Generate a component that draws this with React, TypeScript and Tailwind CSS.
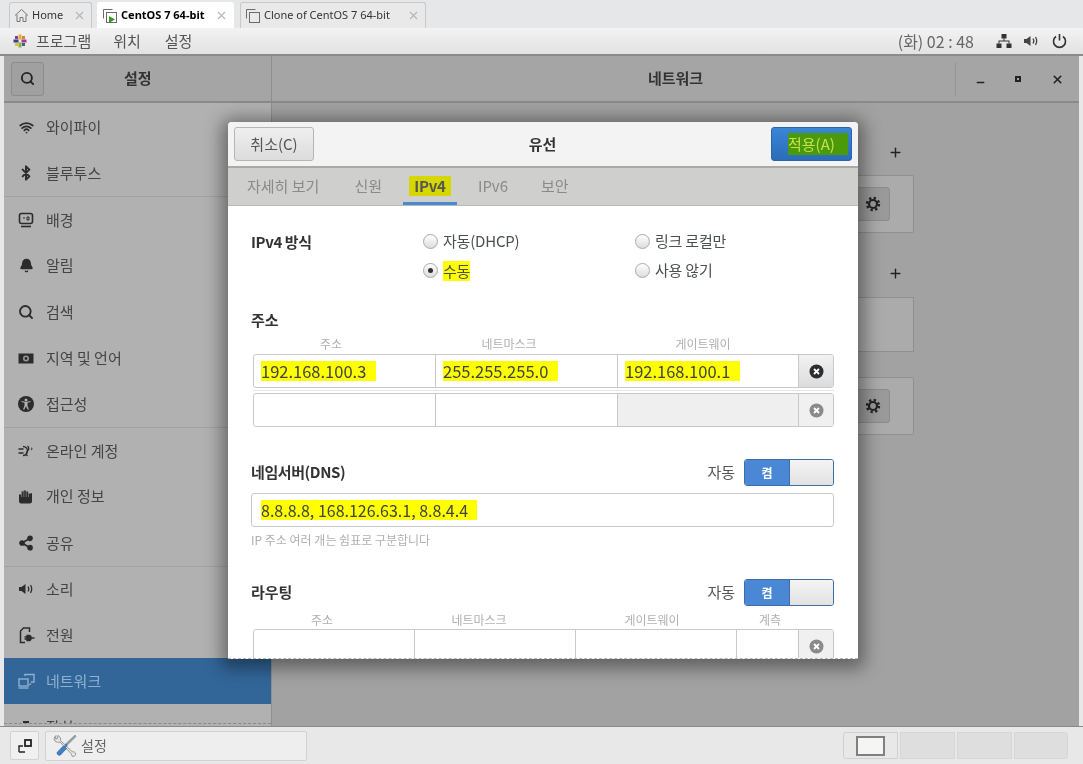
import { Bell, Bluetooth, ChevronRight, Minus, Plus, Search, Share2, Wifi, X } from "lucide-react";

const font = "font-['Noto_Sans_CJK_KR','Noto_Sans',sans-serif]";

function Pinwheel() {
  return (
    <svg width="14" height="14" viewBox="0 0 14 14">
      <rect x="5.5" y="0.5" width="3" height="5" fill="#d9b13b" />
      <rect x="8.5" y="5.5" width="5" height="3" fill="#a23a8c" />
      <rect x="5.5" y="8.5" width="3" height="5" fill="#8cae3a" />
      <rect x="0.5" y="5.5" width="5" height="3" fill="#3a3f94" />
      <rect x="2" y="2" width="3" height="3" fill="#8c3a8c" />
      <rect x="9" y="2" width="3" height="3" fill="#c98a3a" />
      <rect x="2" y="9" width="3" height="3" fill="#d8c23a" />
      <rect x="9" y="9" width="3" height="3" fill="#3a5f94" />
    </svg>
  );
}

function VmIcon({ play }: { play?: boolean }) {
  return (
    <svg width="16" height="16" viewBox="0 0 16 16" fill="none" stroke="#6b6b6b">
      <path d="M1.5 10.5v-9h9" />
      <rect x="4.5" y="4.5" width="10" height="10" fill={play ? "#fff" : "none"} />
      {play && <path d="M7 8l6 3.5-6 3.5z" fill="#3c9a1c" stroke="none" />}
    </svg>
  );
}

function HomeIcon() {
  return (
    <svg width="15" height="15" viewBox="0 0 15 15" fill="none" stroke="#777">
      <path d="M1 7.5L7.5 1.5 14 7.5M3 6.5v7h3v-4h3v4h3v-7" />
    </svg>
  );
}

function Tab({ children, active, icon, w }: { children: string; active?: boolean; icon: React.ReactNode; w: string }) {
  return (
    <div
      className={`flex h-[26px] items-center gap-[3px] rounded-t-[3px] border border-b-0 pl-[4px] pr-[5px] text-[11px] ${w} ${
        active ? "border-white bg-white font-bold text-black" : "border-[#c8c8c8] bg-[#e9e9e9] text-[#333]"
      }`}
    >
      {icon}
      <span className="flex-1 whitespace-nowrap font-['Noto_Sans',sans-serif]">{children}</span>
      <X size={13} className="text-[#b5b5b5]" />
    </div>
  );
}

const G = "#2c2c2c";

function RegionIcon() {
  return (
    <svg width="16" height="16" viewBox="0 0 16 16">
      <path d="M0.5 3.5h15v10h-15z" fill={G} />
      <circle cx="8" cy="8.5" r="3" fill="#999" />
      <circle cx="8" cy="8.5" r="1.4" fill={G} />
    </svg>
  );
}

function BackgroundIcon() {
  return (
    <svg width="16" height="16" viewBox="0 0 16 16" fill="none" stroke={G} strokeWidth="1.6">
      <rect x="1.5" y="1.5" width="13" height="10" rx="2" />
      <path d="M3 14.5h10" />
      <path d="M5 6h2M9 5h2v3H9z" strokeWidth="1" />
    </svg>
  );
}

function AccessIcon() {
  return (
    <svg width="16" height="16" viewBox="0 0 16 16">
      <circle cx="8" cy="8" r="8" fill={G} />
      <circle cx="8" cy="4" r="1.5" fill="#b1b1b1" />
      <path d="M3.5 6l3 .8v3L5 13.5h1.3L8 10.2l1.7 3.3H11L9.500 9.800v-3l3-.8v-1L8 6 3.500 5z" fill="#b1b1b1" />
    </svg>
  );
}

function OnlineIcon() {
  return (
    <svg width="16" height="16" viewBox="0 0 16 16" fill="none" stroke={G} strokeWidth="1.3">
      <path d="M0.500 6h5M0.500 10h5M5 3.500a4.500 4.500 0 0 1 0 9M9.500 3c1.500 1.500 1.500 3.500 0 5s-1.500 3.500 0 5" />
      <path d="M13 5c1.500 0 1.500 1.500 0 2" strokeWidth="1" />
    </svg>
  );
}

function HandIcon() {
  return (
    <svg width="16" height="16" viewBox="0 0 16 16" fill={G}>
      <path d="M1 5.500h2.300V2.500h2.300V1.500h2.400v1h2.300v2h2.400l1.300-.5v8.500c0 1.200-1 2-2.200 2H3c-1.200 0-2-1-2-2.200z" />
      <path d="M3.500 3v5M5.800 2v6M8.200 2v6M10.500 3v5" stroke="#b1b1b1" strokeWidth=".5" />
    </svg>
  );
}

function SoundIcon({ color = G }: { color?: string }) {
  return (
    <svg width="16" height="16" viewBox="0 0 16 16" fill="none">
      <path d="M1 6h2.500L7.500 3v10l-4-3H1z" fill={color} />
      <path d="M10 5.500c1 1.500 1 3.500 0 5M12.500 4c1.500 2.500 1.500 5.500 0 8" stroke={color} strokeWidth="1.300" />
    </svg>
  );
}

function PowerIcon() {
  return (
    <svg width="17" height="17" viewBox="0 0 17 17" fill="none">
      <path d="M7 15.500H2.500V4l3-3h6v4" stroke={G} strokeWidth="1.500" />
      <path d="M9 8.500h3a3 3 0 0 1 0 5H9zM6.500 10h2.500M6.500 12h2.500M14 11h2.500" fill={G} stroke={G} strokeWidth="1.300" />
    </svg>
  );
}

function NetIcon() {
  return (
    <svg width="17" height="16" viewBox="0 0 17 16" fill="none" stroke="#8fb0d0" strokeWidth="1.400">
      <rect x="1" y="6" width="9" height="7" />
      <path d="M0.500 15h10" />
      <path d="M7 3V1.500h9V9h-3" />
      <path d="M11 12l2-1.500" />
    </svg>
  );
}

function DeviceIcon() {
  return (
    <svg width="16" height="16" viewBox="0 0 16 16" fill={G}>
      <rect x="5" y="1" width="6" height="5" />
      <rect x="1" y="6" width="14" height="8" rx="1" />
    </svg>
  );
}

function Gear() {
  return (
    <svg width="16" height="16" viewBox="0 0 16 16" fill="none" stroke="#222">
      <circle cx="8" cy="8" r="4" strokeWidth="2.200" />
      <circle cx="8" cy="8" r="6" strokeWidth="2.400" strokeDasharray="2.300 2.410" />
    </svg>
  );
}

const items: { label: string; icon: React.ReactNode; sep?: boolean; active?: boolean; more?: boolean }[] = [
  { label: "와이파이", icon: <Wifi size={15} strokeWidth={2.8} color={G} /> },
  { label: "블루투스", icon: <Bluetooth size={16} strokeWidth={3} color={G} /> },
  { label: "배경", icon: <BackgroundIcon />, sep: true },
  { label: "알림", icon: <Bell size={15} fill={G} color={G} /> },
  { label: "검색", icon: <Search size={16} strokeWidth={2.8} color={G} /> },
  { label: "지역 및 언어", icon: <RegionIcon /> },
  { label: "접근성", icon: <AccessIcon /> },
  { label: "온라인 계정", icon: <OnlineIcon />, sep: true },
  { label: "개인 정보", icon: <HandIcon /> },
  { label: "공유", icon: <Share2 size={16} fill={G} strokeWidth={2.6} color={G} /> },
  { label: "소리", icon: <SoundIcon />, sep: true },
  { label: "전원", icon: <PowerIcon /> },
  { label: "네트워크", icon: <NetIcon />, active: true },
  { label: "장치", icon: <DeviceIcon />, more: true },
];

function CloseDot({ dim }: { dim?: boolean }) {
  return (
    <svg width="15" height="15" viewBox="0 0 15 15">
      <circle cx="7.500" cy="7.500" r="7" fill={dim ? "#8a8a8a" : "#2a2e30"} />
      <path d="M5 5l5 5M10 5l-5 5" stroke="#fff" strokeWidth="1.800" />
    </svg>
  );
}

function Radio({ label, on, hl }: { label: string; on?: boolean; hl?: boolean }) {
  return (
    <div className="flex h-[29px] items-center gap-[5px] text-[15px] tracking-[-0.2px] text-[#4a4f50]">
      <span className="flex h-[15px] w-[15px] items-center justify-center rounded-full border border-[#a9a9a9] bg-gradient-to-b from-white to-[#dcdcdc]">
        {on && <span className="h-[5px] w-[5px] rounded-full bg-[#2e3436]" />}
      </span>
      <span className={hl ? "bg-[#ffff00] leading-[20px]" : ""}>{label}</span>
    </div>
  );
}

function Switch() {
  return (
    <div className="flex h-[27px] w-[90px] overflow-hidden rounded-[3px] border border-[#3d6ea8]">
      <div className="flex w-[44px] items-center justify-center bg-[#4a88d6] text-[12px] font-bold text-white">켬</div>
      <div className="flex-1 border-l border-[#3d6ea8] bg-gradient-to-b from-[#f4f4f4] to-[#e2e2e2]" />
    </div>
  );
}

function Cell({ w, value, gray }: { w: string; value?: string; gray?: boolean }) {
  return (
    <div className={`flex items-center border-r border-[#c9c9c9] pl-[7px] text-[16.5px] leading-none text-[#3e4344] ${w} ${gray ? "bg-[#efefef]" : ""}`}>
      {value && <span className="bg-[#ffff00] py-[2px] pr-[10px]">{value}</span>}
    </div>
  );
}

function Caption({ w, children }: { w: string; children: string }) {
  return <div className={`text-center text-[12px] leading-[16px] text-[#b0b0b0] ${w}`}>{children}</div>;
}

export default function App() {
  return (
    <div className={`relative flex h-[764px] w-[1083px] flex-col overflow-hidden bg-[#e8e8e8] blur-[0.4px] ${font}`}>
      {/* tabs */}
      <div className="flex h-[28px] shrink-0 items-end gap-[5px] bg-[#e6e7e8] pl-[9px]">
        <Tab icon={<HomeIcon />} w="w-[83px]">Home</Tab>
        <Tab icon={<VmIcon play />} w="w-[137px]" active>CentOS 7 64-bit</Tab>
        <Tab icon={<VmIcon />} w="w-[186px] ml-[1px]">Clone of CentOS 7 64-bit</Tab>
      </div>

      {/* top bar */}
      <div className="flex h-[28px] shrink-0 items-center border-b-2 border-[#8b8b8b] bg-gradient-to-b from-[#f3f3f3] to-[#e2e2e2] pl-[13px] pr-[16px] text-[15px] text-[#555]">
        <Pinwheel />
        <span className="ml-[9px]">프로그램</span>
        <span className="ml-[22px]">위치</span>
        <span className="ml-[24px]">설정</span>
        <span className="ml-auto text-[16px] text-[#666]">(화) 02 : 48</span>
        <svg className="ml-[22px]" width="16" height="16" viewBox="0 0 16 16" fill="#333">
          <rect x="5.500" y="1" width="5" height="4.500" />
          <rect x="0.500" y="10.500" width="5" height="4.500" />
          <rect x="10.500" y="10.500" width="5" height="4.500" />
          <path d="M7.500 5.500h1V7.500H13.500v3h-1V8.500h-9v2h-1v-3H7.500z" />
        </svg>
        <span className="ml-[11px]"><SoundIcon color="#444" /></span>
        <svg className="ml-[13px]" width="15" height="16" viewBox="0 0 15 16" fill="none" stroke="#333" strokeWidth="1.600">
          <path d="M4 3.500a6 6 0 1 0 7 0M7.500 1v6.500" />
        </svg>
      </div>

      {/* window */}
      <div className="flex min-h-0 flex-1 flex-col px-[4px]">
        <div className="flex h-[47px] shrink-0 border-b-2 border-[#8a8a8a] bg-[#a5a5a5]">
          <div className="flex w-[268px] items-center border-r border-[#8f8f8f] pl-[7px]">
            <div className="flex h-[34px] w-[33px] items-center justify-center rounded-[3px] border border-[#8c8c8c] bg-[#a0a0a0]">
              <Search size={15} strokeWidth={3} color="#222" />
            </div>
            <span className="ml-[80px] text-[15px] font-bold text-[#333]">설정</span>
          </div>
          <div className="relative flex flex-1 items-center justify-center">
            <span className="text-[15px] font-bold text-[#333]">네트워크</span>
            <div className="absolute right-0 top-[6px] flex h-[34px] w-[124px] items-center justify-around border-l border-[#969696] pl-[4px] text-[#222]">
              <Minus size={11} strokeWidth={3} className="translate-y-[3px]" />
              <span className="h-[6px] w-[6px] border-2 border-[#222]" />
              <X size={13} strokeWidth={3} />
            </div>
          </div>
        </div>

        <div className="flex min-h-0 flex-1">
          <div className="flex h-full w-[268px] shrink-0 flex-col border-r border-[#8f8f8f] bg-[#b1b1b1]">
            <div className="min-h-0 flex-1 overflow-hidden pt-[1px]">
              {items.map((it) => (
                <div
                  key={it.label}
                  className={`flex h-[46.2px] items-center text-[15px] ${it.sep ? "border-t border-[#a3a3a3]" : ""} ${
                    it.active ? "bg-[#326699] text-[#8fb0d0]" : "text-[#444]"
                  }`}
                >
                  <span className="flex w-[42px] justify-center pl-[6px] pr-[4px]">{it.icon}</span>
                  <span>{it.label}</span>
                  {it.more && <ChevronRight size={14} className="ml-auto mr-[17px]" color={G} />}
                </div>
              ))}
            </div>
            <div className="mb-[2px] border-b border-dashed border-[#8a8a8a]" />
          </div>
          <div className="min-w-0 flex-1 bg-[#a2a2a2]">
            <div className="mx-auto flex w-[476px] flex-col pt-[39px]">
              <div className="flex h-[20px] items-center justify-end pr-[11px] text-[#222]">
                <Plus size={15} strokeWidth={2.2} />
              </div>
              <div className="mt-[13px] flex h-[58px] items-center justify-end rounded-[2px] border border-[#8f8f8f] bg-[#ababab] pr-[23px]">
                <div className="flex h-[34px] w-[34px] items-center justify-center rounded-[3px] border border-[#8c8c8c] bg-[#9a9a9a]">
                  <Gear />
                </div>
              </div>
              <div className="mt-[30px] flex h-[20px] items-center justify-end pr-[11px] text-[#222]">
                <Plus size={15} strokeWidth={2.2} />
              </div>
              <div className="mt-[14px] h-[55px] border border-[#8f8f8f] bg-[#ababab]" />
              <div className="mt-[25px] flex h-[58px] items-center justify-end rounded-[2px] border border-[#8f8f8f] bg-[#ababab] pr-[23px]">
                <div className="flex h-[34px] w-[34px] items-center justify-center rounded-[3px] border border-[#8c8c8c] bg-[#9a9a9a]">
                  <Gear />
                </div>
              </div>
            </div>
          </div>
        </div>
      </div>

      {/* taskbar */}
      <div className="flex h-[38px] shrink-0 items-center border-t border-[#8a8a8a] bg-[#e8e8e8] pl-[10px] pr-[15px]">
        <div className="flex h-[29px] w-[29px] items-center justify-center rounded-[2px] border border-[#d2d2d2] bg-[#f0f0f0]">
          <svg width="14" height="14" viewBox="0 0 14 14" fill="none" stroke="#222" strokeWidth="1.400">
            <path d="M1 13V7h4M7 13H1" />
            <rect x="7" y="1" width="6" height="6" strokeWidth="1.800" />
          </svg>
        </div>
        <div className="ml-[6px] flex h-[30px] w-[262px] items-center rounded-[2px] border border-[#d2d2d2] bg-[#eeeeee] pl-[7px] text-[14px] text-[#666]">
          <svg width="24" height="24" viewBox="0 0 24 24" fill="none">
            <path d="M3 1.500c-2 1.500-2.500 4-1 5.500s3.500 1.500 5 1l11 11.500c.8 1 .5 3 2 3s3.500-2 2.500-3.500-3-.8-4-2L7.500 6.500c.5-2-.5-4-2.500-5l-.5 3-2 .5z" fill="#e4e6e8" stroke="#7d8488" strokeWidth=".8" />
            <path d="M22 1l1 1.500-8 8-1.500-1.500z" fill="#9aa0a5" stroke="#6f767b" strokeWidth=".5" />
            <path d="M13 9.500l1.500 1.500-2 2.500 1 1-6 6.500c-1.200 1.200-4.500-1-3.200-2.800l6-6.300 1 1z" fill="#3f7fc4" stroke="#2f5f95" strokeWidth=".6" />
          </svg>
          <span className="ml-[4px]">설정</span>
        </div>
        <div className="ml-auto flex h-[27px] gap-[2px]">
          <div className="flex w-[55px] items-center justify-center rounded-l-[3px] border border-[#d0d0d0] bg-[#e8e8e8]">
            <div className="h-[20px] w-[29px] border-2 border-[#808080] bg-[#f5f5f3]" />
          </div>
          <div className="w-[55px] border border-[#d6d6d6] bg-[#dedede]" />
          <div className="w-[55px] border border-[#d6d6d6] bg-[#dedede]" />
          <div className="w-[54px] rounded-r-[3px] border border-[#d6d6d6] bg-[#dedede]" />
        </div>
      </div>

      {/* dialog */}
      <div className="absolute left-[228px] top-[122px] flex h-[537px] w-[630px] flex-col overflow-hidden rounded-t-[4px] border-b border-dashed border-[#b5b5b5] bg-white shadow-[0_3px_18px_6px_rgba(0,0,0,0.42)]">
        <div className="flex h-[46px] shrink-0 items-center justify-between border-b-2 border-[#a9a9a6] bg-[#f3f3f3] px-[6px]">
          <div className="flex h-[34px] w-[80px] items-center justify-center rounded-[3px] border border-[#b5b5b5] bg-gradient-to-b from-[#efefef] to-[#dcdcdc] text-[15px] text-[#555]">
            취소(C)
          </div>
          <span className="text-[15px] font-bold text-[#333]">유선</span>
          <div className="flex h-[34px] w-[81px] items-center rounded-[3px] border border-[#2a65a8] bg-gradient-to-b from-[#3a86d6] to-[#2a6cb8] pl-[16px] text-[15px] text-[#c8e04a]">
            <span className="bg-[#4a9a0c] pr-[13px] leading-[22px]">적용(A)</span>
          </div>
        </div>

        <div className="flex h-[38px] shrink-0 items-stretch border-b border-[#b9b9b6] bg-[#cfcfcd] pl-[19px] text-[15px] text-[#8a8a88]">
          <span className="flex items-center">자세히 보기</span>
          <span className="ml-[35px] flex items-center">신원</span>
          <span className="ml-[21px] flex w-[54px] items-center justify-center border-b-[3px] border-[#4a88d6] pt-[2px]">
            <span className="bg-[#d6d600] px-[5px] font-bold leading-[20px] tracking-[-0.3px] text-[#555]">IPv4</span>
          </span>
          <span className="ml-[21px] flex items-center">IPv6</span>
          <span className="ml-[33px] flex items-center">보안</span>
        </div>

        <div className="flex min-h-0 flex-1 flex-col overflow-hidden pl-[23px] pr-[24px] pt-[21px] text-[#333]">
          <div className="flex shrink-0">
            <div className="w-[172px] text-[15px] font-bold leading-[29px] tracking-[-0.4px]">IPv4 방식</div>
            <div className="w-[212px]">
              <Radio label="자동(DHCP)" />
              <Radio label="수동" on hl />
            </div>
            <div>
              <Radio label="링크 로컬만" />
              <Radio label="사용 않기" />
            </div>
          </div>

          <div className="mt-[24px] shrink-0 text-[15px] font-bold leading-[22px]">주소</div>
          <div className="ml-[2px] mt-[5px] flex shrink-0">
            <Caption w="w-[156px]">주소</Caption>
            <Caption w="w-[200px]">네트마스크</Caption>
            <Caption w="w-[188px]">게이트웨이</Caption>
          </div>
          <div className="ml-[2px] mt-[2px] flex h-[34px] w-[581px] shrink-0 overflow-hidden rounded-[3px] border border-[#c9c9c9]">
            <Cell w="w-[182px]" value="192.168.100.3" />
            <Cell w="w-[182px]" value="255.255.255.0" />
            <Cell w="w-[181px]" value="192.168.100.1" />
            <div className="flex flex-1 items-center justify-center bg-gradient-to-b from-[#f2f2f2] to-[#dcdcdc]"><CloseDot /></div>
          </div>
          <div className="ml-[2px] mt-[2px] h-px w-[581px] shrink-0 bg-[#e6e6e6]" />
          <div className="ml-[2px] mt-[2px] flex h-[34px] w-[581px] shrink-0 overflow-hidden rounded-[3px] border border-[#c9c9c9]">
            <Cell w="w-[182px]" />
            <Cell w="w-[182px]" />
            <Cell w="w-[181px]" gray />
            <div className="flex flex-1 items-center justify-center bg-[#f0f0f0]"><CloseDot dim /></div>
          </div>

          <div className="mt-[32px] flex h-[27px] shrink-0 items-center justify-between">
            <span className="text-[15px] font-bold tracking-[-0.4px]">네임서버(DNS)</span>
            <div className="flex items-center gap-[9px]">
              <span className="text-[15px] text-[#555]">자동</span>
              <Switch />
            </div>
          </div>
          <div className="mt-[7px] flex h-[34px] w-[583px] shrink-0 items-center rounded-[3px] border border-[#c9c9c9] pl-[9px] text-[16px] leading-none text-[#3e4344]">
            <span className="bg-[#ffff00] py-[2px] pr-[9px]">8.8.8.8, 168.126.63.1, 8.8.4.4</span>
          </div>
          <div className="mt-[5px] shrink-0 text-[12px] leading-[16px] text-[#b0b0b0]">IP 주소 여러 개는 쉼표로 구분합니다</div>

          <div className="mt-[31px] flex h-[27px] shrink-0 items-center justify-between">
            <span className="text-[15px] font-bold">라우팅</span>
            <div className="flex items-center gap-[9px]">
              <span className="text-[15px] text-[#555]">자동</span>
              <Switch />
            </div>
          </div>
          <div className="ml-[2px] mt-[6px] flex shrink-0">
            <Caption w="w-[138px]">주소</Caption>
            <Caption w="w-[176px]">네트마스크</Caption>
            <Caption w="w-[170px]">게이트웨이</Caption>
            <Caption w="w-[66px]">계측</Caption>
          </div>
          <div className="ml-[2px] mt-[1px] flex h-[34px] w-[581px] shrink-0 overflow-hidden rounded-t-[3px] border border-[#c9c9c9]">
            <Cell w="w-[161px]" />
            <Cell w="w-[161px]" />
            <Cell w="w-[161px]" />
            <Cell w="w-[62px]" />
            <div className="flex flex-1 items-center justify-center bg-[#f0f0f0]"><CloseDot dim /></div>
          </div>
        </div>
      </div>
    </div>
  );
}
